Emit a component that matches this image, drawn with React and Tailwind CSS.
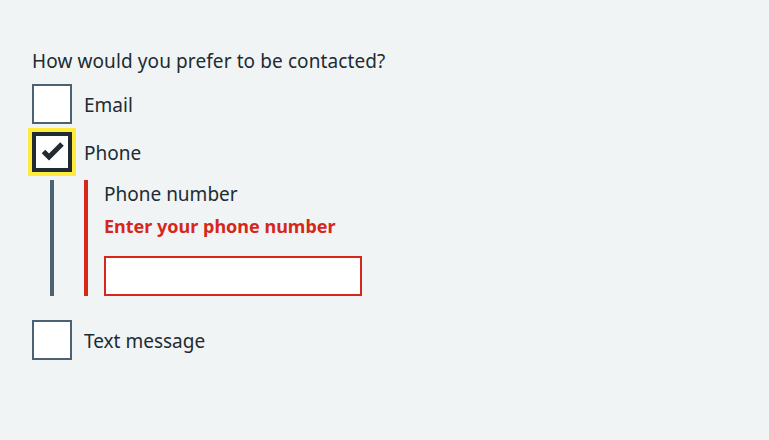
import React from 'react'

const Box = ({ checked }) => {
  if (checked) {
    return (
      <span className="relative block w-10 h-10 shrink-0 bg-white border-4 border-[#212b32] ring-4 ring-[#ffeb3b]">
        <svg className="absolute -left-1 -top-1" width="40" height="40" viewBox="0 0 40 40">
          <polyline points="11.5,19.5 17,25 30,12" fill="none" stroke="#212b32" strokeWidth="5" strokeLinecap="butt" strokeLinejoin="miter" />
        </svg>
      </span>
    )
  }
  return <span className="block w-10 h-10 shrink-0 bg-white border-2 border-[#4c6272]" />
}

const Item = ({ label, checked, className }) => (
  <div className={"flex items-start gap-3 " + className}>
    <Box checked={checked} />
    <span className="pt-[7px] text-[19px] leading-[28px]">{label}</span>
  </div>
)

export default function App() {
  return (
    <div
      className="min-h-screen bg-[#f0f4f5] px-8 pt-[47px] text-[#212b32]"
      style={{ fontFamily: '"Noto Sans", sans-serif' }}
    >
      <div className="text-[19px] leading-[28px] tracking-[0.1px] mb-[9px]">How would you prefer to be contacted?</div>

      <div className="flex flex-col">
        <Item label="Email" className="mb-2" />
        <Item label="Phone" checked className="mb-2" />

        <div className="ml-[18px] pl-[30px] border-l-4 border-[#4c6272] mb-6">
          <div className="border-l-4 border-[#d5281b] pl-4">
            <div className="text-[19px] leading-[28px] mb-1">Phone number</div>
            <div className="text-[18px] leading-[28px] font-bold text-[#d5281b] mb-4">Enter your phone number</div>
            <div className="w-[258px] h-10 bg-white border-2 border-[#d5281b]" />
          </div>
        </div>

        <Item label="Text message" className="mb-2" />
      </div>
    </div>
  )
}
